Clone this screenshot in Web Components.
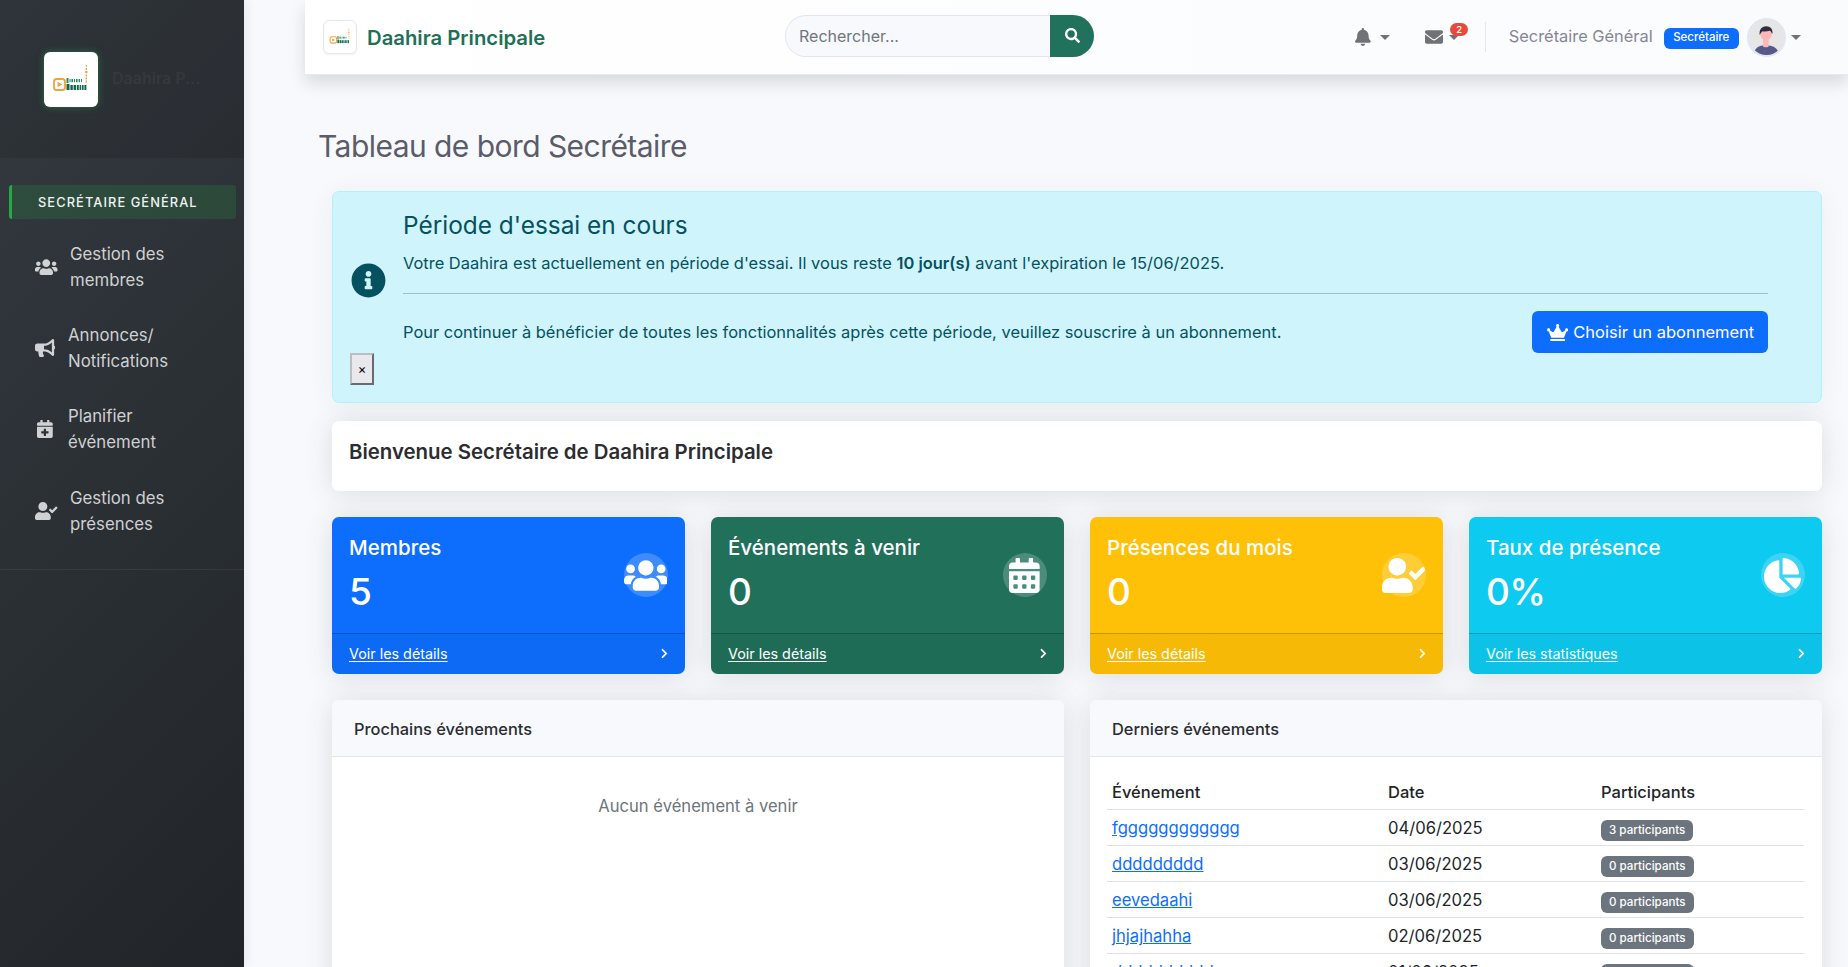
<!DOCTYPE html>
<html lang="fr">
<head>
<meta charset="utf-8">
<title>Tableau de bord Secrétaire</title>
<style>
html,body{margin:0;padding:0;height:100%;overflow:hidden;background:#f8f9fc}
body{font-family:Inter,"Liberation Sans",sans-serif;font-size:16px;line-height:1.5;color:#212529}
</style>
</head>
<body>
<app-shell>
  <side-bar slot="side">
    <nav-item icon="users" w="70">Gestion des<br>membres</nav-item>
    <nav-item icon="bullhorn" w="68">Annonces/<br>Notifications</nav-item>
    <nav-item icon="calendar-plus" w="68">Planifier<br>événement</nav-item>
    <nav-item icon="user-check" w="70">Gestion des<br>présences</nav-item>
  </side-bar>
  <top-bar slot="top"></top-bar>
  <page-title>Tableau de bord Secrétaire</page-title>
  <trial-alert></trial-alert>
  <welcome-card>Bienvenue Secrétaire de Daahira Principale</welcome-card>
  <stat-row>
    <stat-card bg="#0d6efd" title="Membres" value="5" icon="users" link="Voir les détails"></stat-card>
    <stat-card bg="#20705a" title="Événements à venir" value="0" icon="calendar-alt" link="Voir les détails"></stat-card>
    <stat-card bg="#ffc107" title="Présences du mois" value="0" icon="user-check" link="Voir les détails"></stat-card>
    <stat-card bg="#0dcaf0" title="Taux de présence" value="0%" icon="chart-pie" link="Voir les statistiques"></stat-card>
  </stat-row>
  <panel-row>
    <panel-card heading="Prochains événements"><empty-note>Aucun événement à venir</empty-note></panel-card>
    <panel-card heading="Derniers événements"><events-table></events-table></panel-card>
  </panel-row>
</app-shell>
<script>
const ICONS={
users:[640,512,"M96 224c35.3 0 64-28.7 64-64s-28.7-64-64-64-64 28.7-64 64 28.7 64 64 64zm448 0c35.3 0 64-28.7 64-64s-28.7-64-64-64-64 28.7-64 64 28.7 64 64 64zm32 32h-64c-17.6 0-33.5 7.1-45.1 18.6 40.3 22.1 68.9 62 75.1 109.4h66c17.7 0 32-14.3 32-32v-32c0-35.3-28.7-64-64-64zm-256 0c61.9 0 112-50.1 112-112S381.9 32 320 32 208 82.1 208 144s50.1 112 112 112zm76.8 32h-8.3c-20.8 10-43.9 16-68.5 16s-47.6-6-68.5-16h-8.3C179.6 288 128 339.6 128 403.2V432c0 26.5 21.5 48 48 48h288c26.5 0 48-21.5 48-48v-28.8c0-63.6-51.6-115.2-115.2-115.2zm-223.7-13.4C161.5 263.1 145.6 256 128 256H64c-35.3 0-64 28.7-64 64v32c0 17.7 14.3 32 32 32h65.9c6.3-47.4 34.9-87.3 75.2-109.4z"],
bullhorn:[576,512,"M576 240c0-23.63-12.95-44.04-32-55.12V32.01C544 23.26 537.02 0 512 0c-7.12 0-14.19 2.38-19.98 7.02l-85.03 68.03C364.28 109.19 310.66 128 256 128H64c-35.35 0-64 28.65-64 64v96c0 35.35 28.65 64 64 64h33.7c-1.39 10.48-2.18 21.14-2.18 32 0 39.77 9.26 77.35 25.56 110.94 5.19 10.69 16.52 17.06 28.4 17.06h74.28c26.05 0 41.69-29.84 25.9-50.56-16.4-21.52-26.15-48.36-26.15-77.44 0-11.11 1.62-21.79 4.41-32H256c54.66 0 108.28 18.81 150.98 52.95l85.03 68.03a32.023 32.023 0 0 0 19.98 7.02c24.92 0 32-22.78 32-32V295.13C563.05 284.04 576 263.63 576 240zm-96 141.42l-33.05-26.44C392.95 311.78 325.12 288 256 288v-96c69.12 0 136.95-23.78 190.95-66.98L480 98.58v282.84z"],
"calendar-plus":[448,512,"M436 160H12c-6.6 0-12-5.4-12-12v-36c0-26.5 21.5-48 48-48h48V12c0-6.6 5.4-12 12-12h40c6.6 0 12 5.4 12 12v52h128V12c0-6.6 5.4-12 12-12h40c6.6 0 12 5.4 12 12v52h48c26.5 0 48 21.5 48 48v36c0 6.6-5.4 12-12 12zM12 192h424c6.6 0 12 5.4 12 12v260c0 26.5-21.5 48-48 48H48c-26.5 0-48-21.5-48-48V204c0-6.6 5.4-12 12-12zm316 140c0-6.6-5.4-12-12-12h-60v-60c0-6.6-5.4-12-12-12h-40c-6.6 0-12 5.4-12 12v60h-60c-6.6 0-12 5.4-12 12v40c0 6.6 5.4 12 12 12h60v60c0 6.6 5.4 12 12 12h40c6.6 0 12-5.4 12-12v-60h60c6.6 0 12-5.4 12-12v-40z"],
"user-check":[640,512,"M224 256c70.7 0 128-57.3 128-128S294.7 0 224 0 96 57.3 96 128s57.3 128 128 128zm89.6 32h-16.7c-22.2 10.2-46.9 16-72.9 16s-50.6-5.8-72.9-16h-16.7C60.2 288 0 348.2 0 422.4V464c0 26.5 21.5 48 48 48h352c26.5 0 48-21.5 48-48v-41.6c0-74.2-60.2-134.4-134.4-134.4zm323-128.4l-27.8-28.1c-4.6-4.7-12.1-4.7-16.8-.1l-104.8 104-45.5-45.8c-4.6-4.7-12.1-4.7-16.8-.1l-28.1 27.9c-4.7 4.6-4.7 12.1-.1 16.8l81.7 82.3c4.6 4.7 12.1 4.7 16.8.1l141.3-140.2c4.6-4.7 4.7-12.2.1-16.8z"],
bell:[448,512,"M224 512c35.32 0 63.97-28.65 63.97-64H160.03c0 35.35 28.65 64 63.97 64zm215.39-149.71c-19.32-20.76-55.47-51.99-55.47-154.29 0-77.7-54.48-139.9-127.94-155.16V32c0-17.67-14.32-32-31.98-32s-31.98 14.33-31.98 32v20.84C118.56 68.1 64.08 130.3 64.08 208c0 102.3-36.15 133.53-55.47 154.29-6 6.45-8.66 14.16-8.61 21.71.11 16.4 12.98 32 32.1 32h383.8c19.12 0 32-15.6 32.1-32 .05-7.55-2.61-15.27-8.61-21.71z"],
envelope:[512,512,"M502.3 190.8c3.9-3.1 9.7-.2 9.7 4.7V400c0 26.5-21.5 48-48 48H48c-26.5 0-48-21.5-48-48V195.6c0-5 5.7-7.8 9.7-4.7 22.4 17.4 52.1 39.5 154.1 113.6 21.1 15.4 56.7 47.8 92.2 47.6 35.7.3 72-32.8 92.3-47.6 102-74.1 131.6-96.3 154-113.7zM256 320c23.2.4 56.6-29.2 73.4-41.4 132.7-96.3 142.8-104.7 173.4-128.7 5.8-4.5 9.2-11.5 9.2-18.9v-19c0-26.5-21.5-48-48-48H48C21.5 64 0 85.5 0 112v19c0 7.4 3.4 14.3 9.2 18.9 30.6 23.9 40.7 32.4 173.4 128.7 16.8 12.2 50.2 41.8 73.4 41.4z"],
search:[512,512,"M505 442.7L405.3 343c-4.5-4.5-10.6-7-17-7H372c27.6-35.3 44-79.7 44-128C416 93.1 322.9 0 208 0S0 93.1 0 208s93.1 208 208 208c48.3 0 92.7-16.4 128-44v16.3c0 6.4 2.5 12.5 7 17l99.7 99.7c9.4 9.4 24.6 9.4 33.9 0l28.3-28.3c9.4-9.4 9.4-24.6.1-34zM208 336c-70.7 0-128-57.2-128-128 0-70.7 57.2-128 128-128 70.7 0 128 57.2 128 128 0 70.7-57.2 128-128 128z"],
"info-circle":[512,512,"M256 8C119.043 8 8 119.083 8 256c0 136.997 111.043 248 248 248s248-111.003 248-248C504 119.083 392.957 8 256 8zm0 110c23.196 0 42 18.804 42 42s-18.804 42-42 42-42-18.804-42-42 18.804-42 42-42zm56 254c0 6.627-5.373 12-12 12h-88c-6.627 0-12-5.373-12-12v-24c0-6.627 5.373-12 12-12h12v-64h-12c-6.627 0-12-5.373-12-12v-24c0-6.627 5.373-12 12-12h64c6.627 0 12 5.373 12 12v100h12c6.627 0 12 5.373 12 12v24z"],
crown:[640,512,"M528 448H112c-8.8 0-16 7.2-16 16v32c0 8.8 7.2 16 16 16h416c8.8 0 16-7.2 16-16v-32c0-8.8-7.2-16-16-16zm64-320c-26.5 0-48 21.5-48 48 0 7.1 1.6 13.7 4.4 19.8L476 239.2c-15.4 9.2-35.3 4-44.2-11.6L350.3 85C361 76.2 368 63 368 48c0-26.5-21.5-48-48-48s-48 21.5-48 48c0 15 7 28.2 17.7 37l-81.5 142.6c-8.9 15.6-28.9 20.8-44.2 11.6l-72.3-43.4c2.7-6 4.4-12.7 4.4-19.8 0-26.5-21.5-48-48-48S0 149.5 0 176s21.5 48 48 48c2.6 0 5.2-.4 7.7-.8L128 416h384l72.3-192.8c2.5.4 5.1.8 7.7.8 26.5 0 48-21.5 48-48s-21.5-48-48-48z"],
"calendar-alt":[448,512,"M0 464c0 26.5 21.5 48 48 48h352c26.5 0 48-21.5 48-48V192H0v272zm320-196c0-6.6 5.4-12 12-12h40c6.6 0 12 5.4 12 12v40c0 6.6-5.4 12-12 12h-40c-6.6 0-12-5.4-12-12v-40zm0 128c0-6.6 5.4-12 12-12h40c6.6 0 12 5.4 12 12v40c0 6.6-5.4 12-12 12h-40c-6.6 0-12-5.4-12-12v-40zM192 268c0-6.6 5.4-12 12-12h40c6.6 0 12 5.4 12 12v40c0 6.6-5.4 12-12 12h-40c-6.6 0-12-5.4-12-12v-40zm0 128c0-6.6 5.4-12 12-12h40c6.6 0 12 5.4 12 12v40c0 6.6-5.4 12-12 12h-40c-6.6 0-12-5.4-12-12v-40zM64 268c0-6.6 5.4-12 12-12h40c6.6 0 12 5.4 12 12v40c0 6.6-5.4 12-12 12H76c-6.6 0-12-5.4-12-12v-40zm0 128c0-6.6 5.4-12 12-12h40c6.6 0 12 5.4 12 12v40c0 6.6-5.4 12-12 12H76c-6.6 0-12-5.4-12-12v-40zM400 64h-48V16c0-8.8-7.2-16-16-16h-32c-8.8 0-16 7.2-16 16v48H160V16c0-8.8-7.2-16-16-16h-32c-8.8 0-16 7.2-16 16v48H48C21.5 64 0 85.5 0 112v48h448v-48c0-26.5-21.5-48-48-48z"],
"chart-pie":[544,512,"M527.79 288H290.5l158.03 158.03c6.04 6.04 15.98 6.53 22.19.68 38.7-36.46 65.32-85.61 73.13-140.86 1.34-9.46-6.51-17.85-16.06-17.85zm-15.83-64.8C503.72 103.74 408.26 8.28 288.8.04 279.68-.59 272 7.1 272 16.24V240h223.77c9.14 0 16.82-7.68 16.19-16.8zM224 288V50.71c0-9.55-8.39-17.4-17.84-16.06C86.99 51.49-4.1 155.6.14 280.37 4.5 408.51 114.83 513.59 243.03 511.98c50.4-.63 96.97-16.87 135.26-44.03 7.9-5.6 8.42-17.23 1.57-24.08L224 288z"],
"chevron-right":[320,512,"M285.476 272.971L91.132 467.314c-9.373 9.373-24.569 9.373-33.941 0l-22.667-22.667c-9.357-9.357-9.375-24.522-.04-33.901L188.505 256 34.484 101.255c-9.335-9.379-9.317-24.544.04-33.901l22.667-22.667c9.373-9.373 24.569-9.373 33.941 0L285.475 239.03c9.373 9.372 9.373 24.568.001 33.941z"]
};
const LOGO=`<svg viewBox="0 0 54 55" width="100%" height="100%" aria-hidden="true">
<rect x="10" y="27" width="11" height="11" rx="2.6" fill="none" stroke="#f0a23c" stroke-width="1.8"/><path d="M13.6 29.8l4.6 2.7-4.6 2.7z" fill="#f0a23c"/>
<g fill="#2a8a62"><rect x="22.5" y="26" width="2" height="5"/><rect x="25.5" y="27" width="1" height="3.2"/><rect x="27.4" y="27" width="1.6" height="3.2"/><rect x="30" y="27" width="1" height="3.2"/><rect x="32" y="27" width="1.6" height="3.2"/><rect x="34.6" y="27" width="1.4" height="3.2"/><rect x="37" y="27" width="1" height="3.2"/></g>
<g fill="#14664a"><rect x="22.5" y="32" width="3" height="6"/><rect x="26.4" y="33" width="2.4" height="5"/><rect x="29.6" y="33" width="2.4" height="5"/><rect x="32.8" y="33" width="2" height="5"/><rect x="35.6" y="33" width="1.4" height="5"/><rect x="37.8" y="33" width="1.8" height="5"/><rect x="40.4" y="33" width="2" height="5"/></g>
<g fill="#f0a23c"><rect x="41.8" y="13" width="1" height="2"/><rect x="41.6" y="16" width="1.4" height="2"/><circle cx="42.3" cy="20" r="1.3"/><rect x="41.6" y="22.5" width="1.4" height="2"/><rect x="41.6" y="25.5" width="1.4" height="2"/><rect x="41.6" y="28.5" width="1.4" height="2"/></g></svg>`;
function def(name,html,setup){
  customElements.define(name,class extends HTMLElement{
    constructor(){super();this.attachShadow({mode:'open'});}
    connectedCallback(){
      if(this._d)return;this._d=1;
      const a=n=>this.getAttribute(n)||'';
      this.shadowRoot.innerHTML=typeof html==='function'?html(a):html;
      if(setup)setup(this);
    }
  });
}
def('fa-icon',a=>{const i=ICONS[a('name')];const s=+a('size')||16;return `<style>:host{display:inline-flex;line-height:0}svg{display:block;fill:currentColor}</style><svg viewBox="0 0 ${i[0]} ${i[1]}" height="${s}" width="${s*i[0]/i[1]}" aria-hidden="true"><path d="${i[2]}"/></svg>`});

def('app-shell',`<style>
:host{display:grid;grid-template-columns:244px 1fr;height:967px;overflow:hidden}
.side{grid-row:1;display:flex;min-height:0;position:relative;z-index:2}
.main{min-width:0;padding-left:61px;overflow:hidden}
.content{padding:0 26px 0 27px}
</style><div class="side"><slot name="side"></slot></div>
<div class="main"><slot name="top"></slot><div class="content"><slot></slot></div></div>`);

def('side-bar',`<style>
:host{display:flex;flex-direction:column;width:244px;background:linear-gradient(135deg,#343a40 0%,#212529 100%);color:#fff;box-sizing:border-box;box-shadow:4px 0 10px rgba(0,0,0,.05)}
.brand{height:158px;background:rgba(0,0,0,.1);display:flex;align-items:center;padding:0 0 0 44px;box-sizing:border-box;gap:14px}
.logo{width:54px;height:55px;background:#fff;border-radius:6px;box-shadow:0 0 7px rgba(40,167,69,.5);flex:none;position:relative}
.name{font-size:16px;font-weight:600;color:#35393d;position:relative;top:-1px;white-space:nowrap}
.role{margin:27px 8px 0 9px;height:34px;border-left:3px solid #28a745;background:rgba(40,167,69,.2);border-radius:3px;display:flex;align-items:center;padding:1px 0 0 26px;box-sizing:border-box;font-size:12.8px;font-weight:500;letter-spacing:1.1px;color:#f1f3f4;white-space:nowrap}
nav{padding:7px 0 0;border-bottom:1px solid rgba(255,255,255,.07);height:351px;box-sizing:border-box;display:flex;flex-direction:column}
</style><div class="brand"><div class="logo">${LOGO}</div><div class="name">Daahira P...</div></div>
<div class="role">SECRÉTAIRE GÉNÉRAL</div><nav><slot></slot></nav>`);

def('nav-item',a=>`<style>
:host{display:grid;grid-template-columns:${+a('w')}px 1fr;height:81.4px;flex:none;align-items:center;color:rgba(255,255,255,.78);font-size:16.8px;line-height:26px;box-sizing:border-box}
.i{display:flex;justify-content:flex-start;padding-left:${a('icon')==='calendar-plus'?37:35}px}
</style><div class="i"><fa-icon name="${a('icon')}" size="18"></fa-icon></div><div><slot></slot></div>`);

def('top-bar',`<style>
:host{display:flex;align-items:center;height:75px;box-sizing:border-box;border-bottom:1px solid #e6e8f4;background:linear-gradient(90deg,#fff,#fafbfd);box-shadow:0 8px 16px rgba(0,0,0,.13);padding-left:18px;position:relative}
.l{width:34px;height:34px;background:#fff;border:1px solid #e3e6f0;border-radius:6px;box-sizing:border-box;flex:none;overflow:hidden;box-shadow:0 1px 2px rgba(0,0,0,.05)}
.t{margin-left:10px;padding-top:2px;font-size:20.3px;font-weight:600;color:#1e7058;width:418px;white-space:nowrap;flex:none}
.s{display:flex;width:309px;height:42px;box-sizing:border-box;flex:none;margin-top:-3px}
.f{flex:1;background:#f8f9fc;border:1px solid #e3e6f0;border-right:0;border-radius:21px 0 0 21px;padding-left:13px;display:flex;align-items:center;color:#6e7681;font-size:16px}
.b{width:44px;background:#20725c;color:#fff;border-radius:0 21px 21px 0;display:flex;align-items:center;justify-content:center}
.r{display:flex;align-items:center;margin-left:261px;color:#6f7276;height:100%;flex:none}
.c{display:inline-block;border-top:5px solid currentColor;border-left:5px solid transparent;border-right:5px solid transparent;margin-left:9px}
.m{position:relative;display:flex;align-items:center}
.bd{position:absolute;left:25px;top:-5px;width:18px;height:13px;border-radius:7px;background:#e74a3b;color:#fff;font-size:9.5px;line-height:13px;text-align:center;font-weight:500}
.dv{width:1px;height:30px;background:#e3e6f0;margin:0 23px 0 25.5px}
.n{font-size:16.4px;color:#858796;white-space:nowrap;width:155px;margin-top:-1px}
.rb{background:#0d6efd;color:#fff;border-radius:6px;font-size:11.5px;font-weight:500;height:21px;width:75px;display:flex;align-items:center;justify-content:center;flex:none;margin-top:2px}
.av{width:39px;height:39px;border-radius:50%;margin-left:8px;flex:none;box-sizing:border-box;border:2px solid #e3e6f0;overflow:hidden;background:#e6e6e6}
</style>
<div class="l">${LOGO}</div><div class="t">Daahira Principale</div>
<div class="s"><div class="f">Rechercher...</div><div class="b"><fa-icon name="search" size="15"></fa-icon></div></div>
<div class="r">
<fa-icon name="bell" size="18"></fa-icon><span class="c"></span>
<div class="m" style="margin-left:35.500px"><fa-icon name="envelope" size="18"></fa-icon><span class="c" style="margin-left:6px"></span><span class="bd">2</span></div>
<div class="dv"></div><div class="n">Secrétaire Général</div><div class="rb">Secrétaire</div>
<div class="av"><svg viewBox="0 0 39 39" width="35" height="35" aria-hidden="true"><path d="M5 39c1-8 6-10 10-10.500h7c5 .5 10 2.500 12 10.500z" fill="#575a89"/><path d="M15.500 21h6.500v8c0 2-6.500 2-6.500 0z" fill="#ffb8b8"/><circle cx="19" cy="16" r="6.500" fill="#ffb8b8"/><path d="M12 17c-1-6 2-10 7-10s8 3 7 9c-1-2-2-4-3-4-3 1-6 1-8 .5-1 1-2.500 2.500-3 4.500z" fill="#2f2e41"/></svg></div>
<span class="c" style="margin-left:5px"></span>
</div>`);

def('page-title',`<style>:host{display:block;padding:53px 0 27px 0;margin-left:-14px}h1{margin:0;font-size:30px;font-weight:400;line-height:36px;color:#5a5c69;letter-spacing:-.55px;white-space:nowrap}</style><h1><slot></slot></h1>`);

def('trial-alert',`<style>
:host{display:grid;grid-template-columns:52px 1fr;height:212px;box-sizing:border-box;background:#cff4fc;border:1px solid #b6effb;border-radius:7px;color:#055160;padding:0 53px 0 18px;position:relative;box-shadow:0 3px 28px rgba(58,59,69,.06)}
.ic{display:flex;align-items:center;padding-bottom:34px;grid-row:1}
h4{margin:0;font-size:24.4px;font-weight:400;line-height:30px;padding-top:18px}
p{margin:0;font-size:16.45px;line-height:24px}
.p1{margin-top:11px}
b{font-weight:600}
hr{border:0;border-top:1px solid #98c5cf;margin:18px 0 17px}
.row{display:flex;justify-content:space-between;align-items:center}
.btn{display:flex;align-items:center;gap:5px;background:#0d6efd;color:#fff;border-radius:6px;height:42px;width:236px;box-sizing:border-box;padding-left:15px;font-size:16.5px;flex:none;white-space:nowrap}
.x{position:absolute;left:17px;top:161px;width:24px;height:32px;box-sizing:border-box;border:2px outset #bdbdc0;background:#e9e9ed;padding:0;font-size:13px;font-family:Inter,sans-serif;color:#000;display:flex;align-items:center;justify-content:center}
</style>
<div class="ic"><fa-icon name="info-circle" size="35"></fa-icon></div>
<div><h4>Période d'essai en cours</h4>
<p class="p1">Votre Daahira est actuellement en période d'essai. Il vous reste <b>10 jour(s)</b> avant l'expiration le 15/06/2025.</p>
<hr>
<div class="row"><p>Pour continuer à bénéficier de toutes les fonctionnalités après cette période, veuillez souscrire à un abonnement.</p>
<div class="btn"><fa-icon name="crown" size="17"></fa-icon>Choisir un abonnement</div></div></div>
<button class="x">×</button>`);

def('welcome-card',`<style>:host{display:block;height:70px;margin-top:18px;box-sizing:border-box;background:#fff;border-radius:7px;padding:18px 17px 0;box-shadow:0 2px 28px rgba(58,59,69,.15);font-size:20.4px;font-weight:600;line-height:26px;color:#2b2d30}</style><slot></slot>`);

def('stat-row',`<style>:host{display:grid;grid-template-columns:repeat(4,353px);justify-content:space-between;margin-top:26px}</style><slot></slot>`);

def('stat-card',a=>`<style>
:host{display:flex;flex-direction:column;height:157px;background:${a('bg')};border-radius:7px;color:#fff;overflow:hidden;box-shadow:0 2px 28px rgba(58,59,69,.15)}
.top{height:116px;box-sizing:border-box;padding:16px 17.500px 0 17px;display:flex;justify-content:space-between}
.tt{font-size:20.5px;line-height:30px;font-weight:500;white-space:nowrap}
.v{font-size:37px;line-height:54px;font-weight:500;margin-top:2px;letter-spacing:-.6px}
.cc{width:44px;height:44px;border-radius:50%;background:rgba(255,255,255,.2);display:flex;align-items:center;justify-content:center;margin-top:20px;flex:none}
.ft{flex:1;border-top:1px solid rgba(0,0,0,.2);background:rgba(0,0,0,.035);display:flex;align-items:center;justify-content:space-between;padding:0 17px;font-size:14.35px}
u{text-underline-offset:2px}
fa-icon{flex:none}
</style>
<div class="top"><div><div class="tt">${a('title')}</div><div class="v">${a('value')}</div></div><div class="cc"><fa-icon name="${a('icon')}" size="35"></fa-icon></div></div>
<div class="ft"><u>${a('link')}</u><fa-icon name="chevron-right" size="11" style="margin-top:-2px"></fa-icon></div>`);

def('panel-row',`<style>:host{display:grid;grid-template-columns:732px 732px;justify-content:space-between;margin-top:26px;height:500px}</style><slot></slot>`);

def('panel-card',a=>`<style>
:host{display:flex;flex-direction:column;background:#fff;border-radius:7px;overflow:hidden;box-shadow:0 2px 28px rgba(58,59,69,.15)}
.h{height:57px;box-sizing:border-box;background:#f8f9fc;border-bottom:1px solid #e3e6f0;padding:2px 22px 0;display:flex;align-items:center;font-size:16.4px;font-weight:550;color:#2b2d30}
.b{padding:16px 17px}
</style><div class="h">${a('heading')}</div><div class="b"><slot></slot></div>`);

def('empty-note',`<style>:host{display:block;text-align:center;color:#6c757d;padding-top:21px;font-size:16.6px;line-height:24px}</style><slot></slot>`);

def('events-table',()=>{
 const rows=[['fgggggggggggg','04/06/2025','3 participants'],['ddddddddd','03/06/2025','0 participants'],['eevedaahi','03/06/2025','0 participants'],['jhjajhahha','02/06/2025','0 participants'],['dddddddddd','01/06/2025','0 participants']];
 return `<style>
:host{display:block}
table{border-collapse:collapse;width:697px;table-layout:fixed}
th,td{text-align:left;padding:2px 5px 0;height:36px;box-sizing:border-box;border-bottom:1px solid #dee2e6;font-size:16.6px;line-height:24px;white-space:nowrap}
th{font-weight:550;color:#212529;font-size:16.5px}
td{color:#212529}
a{color:#0d6efd;text-decoration:underline}
.bg{display:inline-block;background:#6c757d;color:#fff;border-radius:6px;height:21px;line-height:21px;padding:0 8px;font-size:11.6px;font-weight:500;vertical-align:middle;position:relative;top:1px}
</style><table><colgroup><col style="width:276px"><col style="width:213px"><col></colgroup>
<thead><tr><th>Événement</th><th>Date</th><th>Participants</th></tr></thead><tbody>
${rows.map(r=>`<tr><td><a href="#">${r[0]}</a></td><td>${r[1]}</td><td><span class="bg">${r[2]}</span></td></tr>`).join('')}
</tbody></table>`});
</script>
</body>
</html>
